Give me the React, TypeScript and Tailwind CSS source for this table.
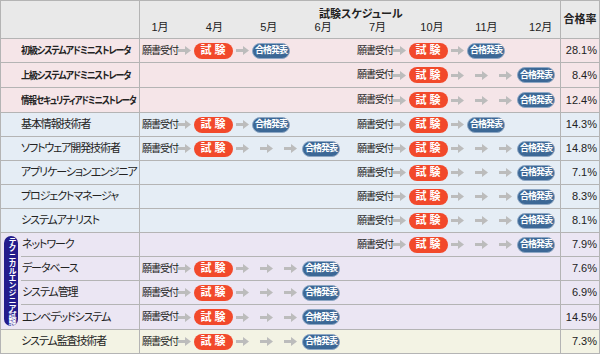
import React from 'react';

// 試験スケジュール table: label column, an eight-month timeline, pass rate.
type Path = 'short' | 'long';

type Exam = {
  label: string;
  bg: string;
  h: string;
  spring?: Path;
  fall?: Path;
  rate: string;
  // squeezed bold labels of the アドミニストレータ rows
  squeeze?: string;
};

const FONT = "font-['Liberation_Sans','Noto_Sans_CJK_JP',sans-serif]";

const upper: Exam[] = [
  { label: '初級システムアドミニストレータ', bg: 'bg-[#f5e5e8]', h: 'h-[24px]', spring: 'short', fall: 'short', rate: '28.1%', squeeze: 'scale-x-[0.9]' },
  { label: '上級システムアドミニストレータ', bg: 'bg-[#f5e5e8]', h: 'h-[25px]', fall: 'long', rate: '8.4%', squeeze: 'scale-x-[0.9]' },
  { label: '情報セキュリティアドミニストレータ', bg: 'bg-[#f5e5e8]', h: 'h-[25px]', fall: 'long', rate: '12.4%', squeeze: 'scale-x-[0.85]' },
  { label: '基本情報技術者', bg: 'bg-[#e5edf5]', h: 'h-[24px]', spring: 'short', fall: 'short', rate: '14.3%' },
  { label: 'ソフトウェア開発技術者', bg: 'bg-[#e5edf5]', h: 'h-[24px]', spring: 'long', fall: 'long', rate: '14.8%' },
  { label: 'アプリケーションエンジニア', bg: 'bg-[#e5edf5]', h: 'h-[24px]', fall: 'long', rate: '7.1%' },
  { label: 'プロジェクトマネージャ', bg: 'bg-[#e5edf5]', h: 'h-[24px]', fall: 'long', rate: '8.3%' },
  { label: 'システムアナリスト', bg: 'bg-[#e5edf5]', h: 'h-[24px]', fall: 'long', rate: '8.1%' },
];

// the four テクニカルエンジニア rows share the pill on the left
const technical: Exam[] = [
  { label: 'ネットワーク', bg: 'bg-[#ebe6f3]', h: 'h-[24px]', fall: 'long', rate: '7.9%' },
  { label: 'データベース', bg: 'bg-[#ebe6f3]', h: 'h-[24px]', spring: 'long', rate: '7.6%' },
  { label: 'システム管理', bg: 'bg-[#ebe6f3]', h: 'h-[24px]', spring: 'long', rate: '6.9%' },
  { label: 'エンベデッドシステム', bg: 'bg-[#ebe6f3]', h: 'h-[25px]', spring: 'long', rate: '14.5%' },
];

const audit: Exam = { label: 'システム監査技術者', bg: 'bg-[#f3f3e4]', h: 'h-[24px]', spring: 'long', rate: '7.3%' };

const months = ['1月', '4月', '5月', '6月', '7月', '10月', '11月', '12月'];

function Arrow({ className = '' }: { className?: string }) {
  return (
    <svg width="13" height="9" viewBox="0 0 13 9" className={`shrink-0 ${className}`}>
      <path d="M0 3h7V0l6 4.5L7 9V6H0z" fill="#bcbcbc" />
    </svg>
  );
}

function Exam() {
  return (
    <span className="ml-[3px] flex h-[16px] w-[39px] shrink-0 items-center justify-center rounded-full bg-[#f2492b] pl-[2px] text-[11px] font-bold leading-none tracking-[3px] text-white">
      試験
    </span>
  );
}

function Result({ className = '' }: { className?: string }) {
  return (
    <span
      className={`flex h-[16px] w-[38px] shrink-0 items-center justify-center rounded-full border border-[#8ea7c4] bg-[#3c6896] text-[9px] font-bold leading-none tracking-[-1px] text-white ${className}`}
    >
      合格発表
    </span>
  );
}

function Segment({ path }: { path: Path }) {
  return (
    <div className="flex items-center">
      <span className="w-[34px] shrink-0 whitespace-nowrap text-[10px] leading-none tracking-[-1px] text-[#222] [font-feature-settings:'palt']">
        願書受付
      </span>
      <Arrow className="ml-[2px]" />
      <Exam />
      <Arrow className="ml-[3px]" />
      {path === 'long' ? (
        <>
          <Arrow className="ml-[11px]" />
          <Arrow className="ml-[11px]" />
          <Result className="ml-[5px]" />
        </>
      ) : (
        <Result className="ml-[3px]" />
      )}
    </div>
  );
}

function Cells({ exam }: { exam: Exam }) {
  return (
    <>
      <div className="flex w-[421px] shrink-0 items-center border-r border-[#b4b4b4] pl-[2px]">
        <div className="w-[215px] shrink-0">{exam.spring && <Segment path={exam.spring} />}</div>
        {exam.fall && <Segment path={exam.fall} />}
      </div>
      <div className="flex w-[38px] shrink-0 items-center justify-end pr-[2px] text-[11px] text-[#222]">
        {exam.rate}
      </div>
    </>
  );
}

function LabelText({ exam }: { exam: Exam }) {
  return exam.squeeze ? (
    <span
      className={`origin-left whitespace-nowrap text-[10px] font-bold tracking-[-1.2px] text-[#222] [font-feature-settings:'palt'] ${exam.squeeze}`}
    >
      {exam.label}
    </span>
  ) : (
    <span className="whitespace-nowrap text-[11px] tracking-[-1.1px] text-[#222] [font-feature-settings:'palt']">
      {exam.label}
    </span>
  );
}

function Row({ exam }: { exam: Exam }) {
  return (
    <div className={`flex border-b border-[#b4b4b4] ${exam.bg} ${exam.h}`}>
      <div className="flex w-[139px] shrink-0 items-center overflow-hidden border-r border-[#b4b4b4] pl-[20px]">
        <LabelText exam={exam} />
      </div>
      <Cells exam={exam} />
    </div>
  );
}

export default function App() {
  return (
    <div className={`w-[600px] border-l border-r border-t border-[#b4b4b4] bg-white text-[#222] ${FONT}`}>
      <div className="flex h-[38px] border-b border-[#b4b4b4] bg-[#e9e9e9]">
        <div className="w-[139px] shrink-0 border-r border-[#b4b4b4]" />
        <div className="flex w-[421px] shrink-0 flex-col border-r border-[#b4b4b4]">
          <div className="pl-[179px] pt-[6px] text-[11px] font-bold leading-[14px] [font-feature-settings:'palt']">
            試験スケジュール
          </div>
          <div className="flex gap-[24.4px] pl-[5px] text-[11px] leading-[13px]">
            {months.map((m) => (
              <span key={m} className="w-[30px] text-center">
                {m}
              </span>
            ))}
          </div>
        </div>
        <div className="flex w-[38px] shrink-0 items-center justify-center text-[11px] font-bold">合格率</div>
      </div>

      {upper.map((exam) => (
        <Row key={exam.label} exam={exam} />
      ))}

      <div className="flex bg-[#ebe6f3]">
        <div className="flex w-[20px] shrink-0 items-center justify-center border-b border-[#b4b4b4]">
          <div className="flex h-[90px] w-[14px] items-center justify-center overflow-hidden rounded-full bg-[#231c8c]">
            <span className="whitespace-nowrap text-[8px] font-bold leading-[14px] tracking-[-0.6px] text-white [writing-mode:vertical-rl]">
              テクニカルエンジニア試験
            </span>
          </div>
        </div>
        <div className="flex flex-col">
          {technical.map((exam) => (
            <div key={exam.label} className={`flex border-b border-[#b4b4b4] ${exam.h}`}>
              <div className="flex w-[119px] shrink-0 items-center border-r border-[#b4b4b4] pl-[1px]">
                <LabelText exam={exam} />
              </div>
              <Cells exam={exam} />
            </div>
          ))}
        </div>
      </div>

      <Row exam={audit} />
    </div>
  );
}
